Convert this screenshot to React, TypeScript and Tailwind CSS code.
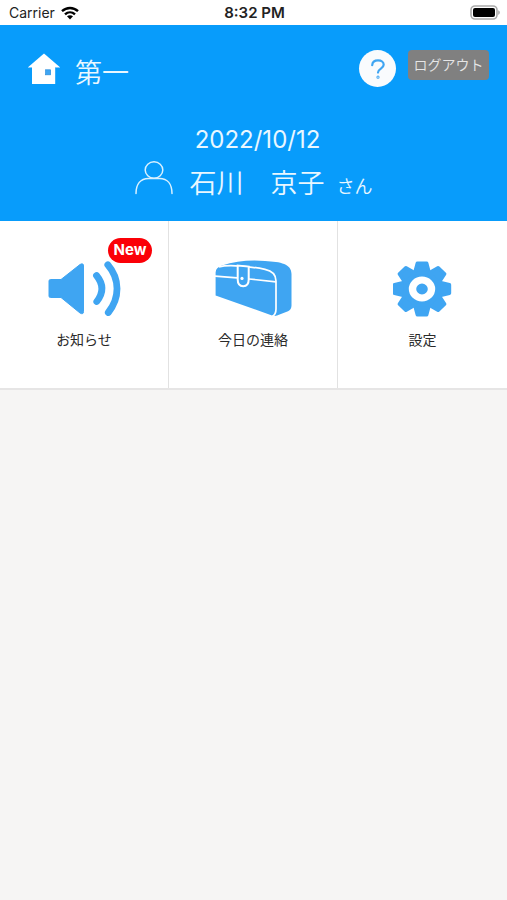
import React from "react";

const BLUE = "#3fa5f2";

function WifiIcon() {
  return (
    <svg width="18" height="14" viewBox="0 0 18 14" aria-hidden="true">
      <g fill="none" stroke="#000" strokeWidth="2.4">
        <path d="M1 5.2C5.6 0.9 12.4 0.9 17 5.2" />
        <path d="M4 8.4C6.9 5.7 11.1 5.7 14 8.4" />
      </g>
      <path d="M6 10.3C7.7 8.8 10.3 8.8 12 10.3L9 13.6Z" fill="#000" />
    </svg>
  );
}

function BatteryIcon() {
  return (
    <svg width="30" height="15" viewBox="0 0 30 15" aria-hidden="true">
      <rect x="1" y="1" width="26" height="13" rx="4" fill="#fff" stroke="#aaa" strokeWidth="1.6" />
      <rect x="3" y="3" width="22" height="9" rx="2" fill="#000" />
      <path d="M28.2 5.2C30.4 6 30.4 9 28.2 9.8Z" fill="#aaa" />
    </svg>
  );
}

function HouseIcon() {
  return (
    <svg width="32" height="32" viewBox="0 0 32 32" aria-hidden="true">
      <path d="M16 0.5L32 14.2H0Z" fill="#fff" />
      <path d="M4 13.5H27.2V31H4Z" fill="#fff" />
      <path d="M0 14.5H4M27.2 14.5H32" stroke="#8fcdfb" strokeWidth="0.8" />
      <rect x="17.6" y="16.8" width="5" height="5" fill="#3fa5f2" stroke="#2b8fdc" strokeWidth="0.7" />
    </svg>
  );
}

function PersonIcon() {
  return (
    <svg width="38" height="34" viewBox="0 0 38 34" fill="none" stroke="#d9f1ff" strokeWidth="1.5" strokeLinecap="round" aria-hidden="true">
      <ellipse cx="19" cy="9" rx="8.8" ry="8.2" />
      <path d="M1 32.5C1 23 5.5 17.4 13.5 17.4H24.5C32.5 17.4 37 23 37 32.5" />
    </svg>
  );
}

function SpeakerIcon() {
  return (
    <svg width="73" height="58" viewBox="0 0 73 58" aria-hidden="true">
      <path
        d="M2.5 20.5H13L32 5.5Q35.5 3.5 35.5 7V52.5Q35.5 56 32 54L13 38.5H2.5Q1 38.5 1 37V22Q1 20.5 2.5 20.5Z"
        fill={BLUE}
        stroke={BLUE}
        strokeWidth="1"
      />
      <g fill="none" stroke={BLUE} strokeWidth="6.8" strokeLinecap="round">
        <path d="M48.5 16.5C55.5 25 55.5 34 48.8 42.5" />
        <path d="M59.8 5.8C72 20 72 39 60.3 53.5" />
      </g>
    </svg>
  );
}

function BagIcon() {
  return (
    <svg width="77" height="58" viewBox="0 0 77 58" aria-hidden="true">
      <path
        d="M0.6 36.5V13.5Q0.8 8.5 7 6.6Q27 0 50 2C66 2.8 76.5 5 76.5 15V46.5Q76.5 50.5 73 52.2L62 56.6Q59.5 57.4 57 56.4Z"
        fill={BLUE}
      />
      <g fill="none" stroke="#fff" strokeWidth="1.7">
        <path d="M4 7.8C14 5.4 35 7.4 50 10.3Q61 12.5 61 22V50Q61 55.5 57 57.5" />
        <path d="M0 17.2L22 18.8M34 20L61 22.8" />
        <path d="M22.7 6.5V20.5Q22.7 27 28.2 27.2Q33.7 27 33.7 20.5V7.6Z" fill={BLUE} strokeWidth="2" />
      </g>
      <circle cx="27" cy="19.4" r="1.6" fill="#fff" />
    </svg>
  );
}

const teeth = [0, 45, 90, 135, 180, 225, 270, 315];

function GearIcon() {
  return (
    <svg width="60" height="58" viewBox="-29 -30 60 58" aria-hidden="true">
      <g transform="scale(1 0.94)">
        <circle r="21" fill={BLUE} />
        {teeth.map((angle) => (
          <path
            key={angle}
            transform={`rotate(${angle})`}
            d="M-7.2 -17L-4.6 -27.4H4.6L7.2 -17Z"
            fill={BLUE}
            stroke={BLUE}
            strokeWidth="3.6"
            strokeLinejoin="round"
          />
        ))}
        <circle r="9.5" fill={BLUE} stroke="#fff" strokeWidth="7.4" />
      </g>
    </svg>
  );
}

function HelpMark() {
  return (
    <svg width="16" height="20" viewBox="0 0 16 20" fill="none" stroke={BLUE} strokeWidth="2.2" strokeLinecap="round" aria-hidden="true">
      <path d="M2.2 6.2C2.4 2.8 4.8 1.4 8 1.4C11.4 1.4 13.7 3 13.7 5.8C13.7 9.6 8 9.6 8 13.6" />
      <circle cx="8" cy="18.2" r="0.5" />
    </svg>
  );
}

function MenuItem({ label, icon, badge }: { label: string; icon: React.ReactNode; badge?: string }) {
  return (
    <button type="button" className="relative flex flex-col items-center gap-[13px] border-r border-[#e2e2e2] pt-[38px] pb-[38px] last:border-r-0">
      {icon}
      <span className="text-sm leading-5 text-[#2b2b2b]">{label}</span>
      {badge && (
        <span className="absolute top-[17px] right-4 flex h-[25px] w-11 items-center justify-center rounded-full bg-[#fb0007] text-[15px] font-bold text-white">
          {badge}
        </span>
      )}
    </button>
  );
}

export default function App() {
  return (
    <div className="min-h-screen bg-[#f6f5f4] font-['Inter','Noto_Sans_CJK_JP',sans-serif]">
      <div className="grid h-[25px] grid-cols-3 items-center bg-white pr-[7px] pl-[9px] text-sm text-[#222]">
        <div className="flex items-center gap-1.5">
          <span>Carrier</span>
          <WifiIcon />
        </div>
        <div className="text-center text-[15px] font-semibold">8:32 PM</div>
        <div className="flex justify-end">
          <BatteryIcon />
        </div>
      </div>

      <header className="bg-[#089cfb] px-[18px] pt-[25px] pb-[15px] text-[#e9f7ff]">
        <div className="flex items-start justify-between">
          <div className="flex items-start gap-[15px] pt-[3px] pl-[10px]">
            <HouseIcon />
            <h1 className="text-[27px] leading-[41px] font-[350]">第一</h1>
          </div>
          <div className="flex items-start gap-3">
            <button type="button" aria-label="ヘルプ" className="flex size-[37px] items-center justify-center rounded-full bg-[#f9fbfd]">
              <HelpMark />
            </button>
            <button type="button" className="h-[30px] w-[81px] rounded bg-[#808080] text-sm font-[350] text-[#e6e6e6]">
              ログアウト
            </button>
          </div>
        </div>
        <p className="mt-[30px] pl-2 text-center text-2xl leading-8">2022/10/12</p>
        <div className="flex items-start justify-center gap-[17px] pt-[5px]">
          <PersonIcon />
          <p className="flex items-baseline gap-3 pt-1 leading-[38px] font-[350] whitespace-pre">
            <span className="text-[27px]">石川　京子</span>
            <span className="text-lg leading-[38px]">さん</span>
          </p>
        </div>
      </header>

      <nav className="grid grid-cols-3 border-b-2 border-[#e6e5e5] bg-white">
        <MenuItem label="お知らせ" icon={<SpeakerIcon />} badge="New" />
        <MenuItem label="今日の連絡" icon={<BagIcon />} />
        <MenuItem label="設定" icon={<GearIcon />} />
      </nav>
    </div>
  );
}
